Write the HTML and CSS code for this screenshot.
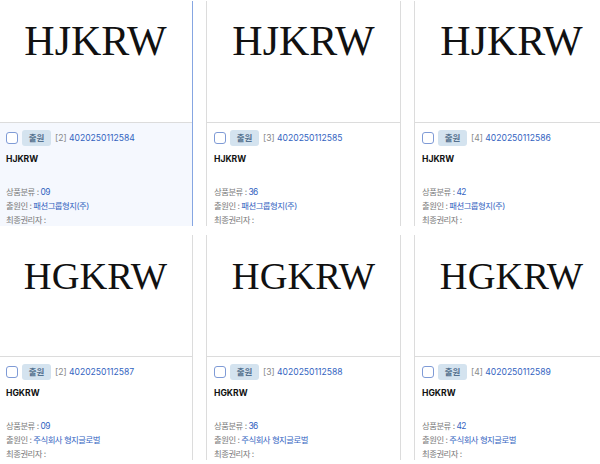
FILE: index.html
```html
<!DOCTYPE html>
<html lang="ko">
<head>
  <meta charset="UTF-8">
  <title>상표 검색 결과</title>
  <link rel="stylesheet" href="styles.css">
</head>
<body>
  <div class="result-grid">
    <div class="mark-card mark-card_active">
      <div class="mark-thumb">HJKRW</div>
      <div class="mark-info">
        <div class="mark-head">
          <span class="mark-check"></span>
          <span class="mark-badge">출원</span>
          <span class="mark-no"><span class="mark-idx">[2]</span> 4020250112584</span>
        </div>
        <p class="mark-title">HJKRW</p>
        <p class="mark-meta"><span class="meta-label">상품분류 :</span> <span class="meta-value">09</span></p>
        <p class="mark-meta"><span class="meta-label">출원인 :</span> <span class="meta-value">패션그룹형지(주)</span></p>
        <p class="mark-meta"><span class="meta-label">최종권리자 :</span></p>
      </div>
    </div>
    <div class="mark-card">
      <div class="mark-thumb">HJKRW</div>
      <div class="mark-info">
        <div class="mark-head">
          <span class="mark-check"></span>
          <span class="mark-badge">출원</span>
          <span class="mark-no"><span class="mark-idx">[3]</span> 4020250112585</span>
        </div>
        <p class="mark-title">HJKRW</p>
        <p class="mark-meta"><span class="meta-label">상품분류 :</span> <span class="meta-value">36</span></p>
        <p class="mark-meta"><span class="meta-label">출원인 :</span> <span class="meta-value">패션그룹형지(주)</span></p>
        <p class="mark-meta"><span class="meta-label">최종권리자 :</span></p>
      </div>
    </div>
    <div class="mark-card">
      <div class="mark-thumb">HJKRW</div>
      <div class="mark-info">
        <div class="mark-head">
          <span class="mark-check"></span>
          <span class="mark-badge">출원</span>
          <span class="mark-no"><span class="mark-idx">[4]</span> 4020250112586</span>
        </div>
        <p class="mark-title">HJKRW</p>
        <p class="mark-meta"><span class="meta-label">상품분류 :</span> <span class="meta-value">42</span></p>
        <p class="mark-meta"><span class="meta-label">출원인 :</span> <span class="meta-value">패션그룹형지(주)</span></p>
        <p class="mark-meta"><span class="meta-label">최종권리자 :</span></p>
      </div>
    </div>
    <div class="mark-card">
      <div class="mark-thumb mark-thumb_small">HGKRW</div>
      <div class="mark-info">
        <div class="mark-head">
          <span class="mark-check"></span>
          <span class="mark-badge">출원</span>
          <span class="mark-no"><span class="mark-idx">[2]</span> 4020250112587</span>
        </div>
        <p class="mark-title">HGKRW</p>
        <p class="mark-meta"><span class="meta-label">상품분류 :</span> <span class="meta-value">09</span></p>
        <p class="mark-meta"><span class="meta-label">출원인 :</span> <span class="meta-value">주식회사 형지글로벌</span></p>
        <p class="mark-meta"><span class="meta-label">최종권리자 :</span></p>
      </div>
    </div>
    <div class="mark-card">
      <div class="mark-thumb mark-thumb_small">HGKRW</div>
      <div class="mark-info">
        <div class="mark-head">
          <span class="mark-check"></span>
          <span class="mark-badge">출원</span>
          <span class="mark-no"><span class="mark-idx">[3]</span> 4020250112588</span>
        </div>
        <p class="mark-title">HGKRW</p>
        <p class="mark-meta"><span class="meta-label">상품분류 :</span> <span class="meta-value">36</span></p>
        <p class="mark-meta"><span class="meta-label">출원인 :</span> <span class="meta-value">주식회사 형지글로벌</span></p>
        <p class="mark-meta"><span class="meta-label">최종권리자 :</span></p>
      </div>
    </div>
    <div class="mark-card">
      <div class="mark-thumb mark-thumb_small">HGKRW</div>
      <div class="mark-info">
        <div class="mark-head">
          <span class="mark-check"></span>
          <span class="mark-badge">출원</span>
          <span class="mark-no"><span class="mark-idx">[4]</span> 4020250112589</span>
        </div>
        <p class="mark-title">HGKRW</p>
        <p class="mark-meta"><span class="meta-label">상품분류 :</span> <span class="meta-value">42</span></p>
        <p class="mark-meta"><span class="meta-label">출원인 :</span> <span class="meta-value">주식회사 형지글로벌</span></p>
        <p class="mark-meta"><span class="meta-label">최종권리자 :</span></p>
      </div>
    </div>
  </div>
</body>
</html>
```

FILE: styles.css
```css
* {
  margin: 0;
  padding: 0;
  box-sizing: border-box;
}

body {
  background-color: #fff;
  font-family: Inter, "Noto Sans CJK KR", sans-serif;
  overflow: hidden;
}

.result-grid {
  display: grid;
  grid-template-columns: repeat(3, 195px);
  column-gap: 13px;
  row-gap: 9px;
  margin: 1px 0 0 -2px;
}

.mark-card {
  height: 225px;
  overflow: hidden;
  border-left: 1px solid #dcdcdc;
  border-right: 1px solid #dcdcdc;
}

.mark-card_active {
  border-color: #86a6e2;
}

.mark-card_active .mark-info {
  background-color: #f5f8fe;
}

/* 상표 이미지 영역 */
.mark-thumb {
  height: 122px;
  padding-top: 20px;
  border-bottom: 1px solid #dcdcdc;
  text-align: center;
  font-family: "Liberation Serif", serif;
  font-size: 42px;
  line-height: 41px;
  color: #111;
}

/* 글자가 넓은 상표는 조금 작게 */
.mark-thumb_small {
  padding-top: 21px;
  font-size: 38.5px;
}

.mark-info {
  height: 100%;
  padding: 7px 7px 0;
}

.mark-head {
  display: flex;
  align-items: center;
  height: 16px;
}

.mark-check {
  width: 12px;
  height: 12px;
  border: 1.5px solid #7f9bd6;
  border-radius: 3px;
  background-color: #fff;
  margin-right: 4px;
}

.mark-badge {
  width: 29px;
  height: 16px;
  line-height: 16px;
  border-radius: 3px;
  background-color: #d4e3ef;
  color: #56728f;
  font-size: 8.5px;
  font-weight: 600;
  text-align: center;
  margin-right: 4px;
}

.mark-no {
  font-size: 8.6px;
  color: #3363bf;
}

.mark-idx {
  color: #888;
}

.mark-title {
  margin-top: 7px;
  margin-bottom: 20px;
  font-size: 8.6px;
  line-height: 12px;
  font-weight: 700;
  color: #111;
}

.mark-meta {
  font-size: 8.4px;
  line-height: 14px;
  letter-spacing: -0.06em;
  color: #7a7a7a;
}

.meta-value {
  color: #3363bf;
}
```
